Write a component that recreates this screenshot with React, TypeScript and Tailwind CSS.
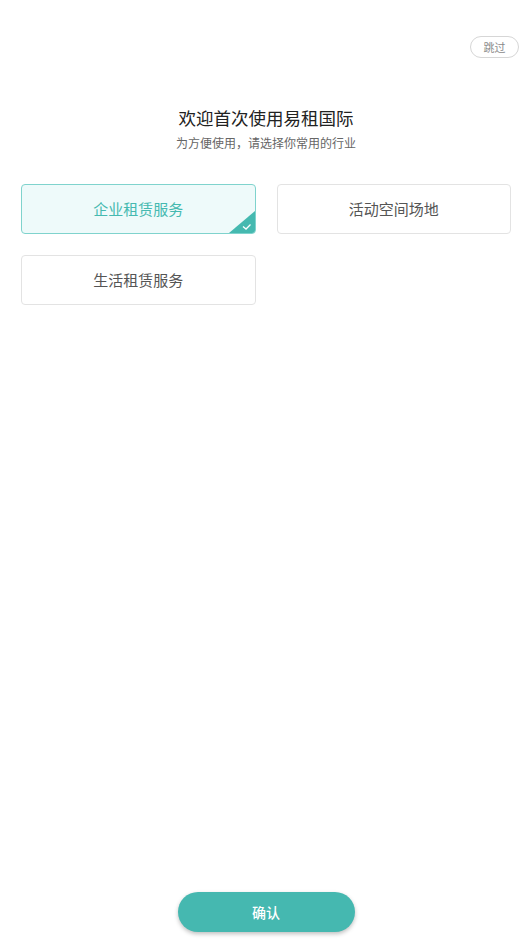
import { useState } from 'react';

const industries = ['企业租赁服务', '活动空间场地', '生活租赁服务'];

export default function App() {
  const [selected, setSelected] = useState(0);

  return (
    <div
      className="flex h-[946px] w-[532px] flex-col bg-white"
      style={{ fontFamily: '"Noto Sans CJK SC", "Noto Sans", sans-serif' }}
    >
      <div className="flex justify-end pr-[13px] pt-[36px]">
        <button className="h-[22px] w-[49px] rounded-full border border-[#d6d6d6] text-[11px] leading-none text-[#8a8a8a]">
          跳过
        </button>
      </div>

      <div className="mt-[48px] flex flex-col items-center">
        <h1 className="text-[17.5px] leading-[24px] font-normal text-[#222]">欢迎首次使用易租国际</h1>
        <p className="mt-[4px] text-[12px] leading-[18px] text-[#666]">为方便使用，请选择你常用的行业</p>
      </div>

      <div className="mt-[32px] grid grid-cols-2 gap-x-[21px] gap-y-[21px] px-[21px]">
        {industries.map((name, i) => {
          const active = i === selected;
          return (
            <button
              key={name}
              onClick={() => setSelected(i)}
              className={`relative flex h-[50px] items-center justify-center overflow-hidden rounded-[4px] border text-[15px] ${
                active
                  ? 'border-[#7fd3cd] bg-[#eefafa] text-[#45b9b0]'
                  : 'border-[#e3e3e3] bg-white text-[#555]'
              }`}
            >
              {name}
              {active ? (
                <svg className="absolute bottom-0 right-0" width="26" height="22" viewBox="0 0 26 22">
                  <polygon points="26,0 26,22 0,22" fill="#45b9b0" />
                  <path d="M14 15.5 L17 18 L21.5 13.5" stroke="#fff" strokeWidth="1.3" fill="none" />
                </svg>
              ) : null}
            </button>
          );
        })}
      </div>

      <div className="mt-auto flex justify-center pb-[14px]">
        <button className="h-[40px] w-[177px] rounded-full bg-[#45b8b0] text-[14px] font-medium text-white shadow-[0_2px_4px_rgba(0,0,0,0.25)]">
          确认
        </button>
      </div>
    </div>
  );
}
